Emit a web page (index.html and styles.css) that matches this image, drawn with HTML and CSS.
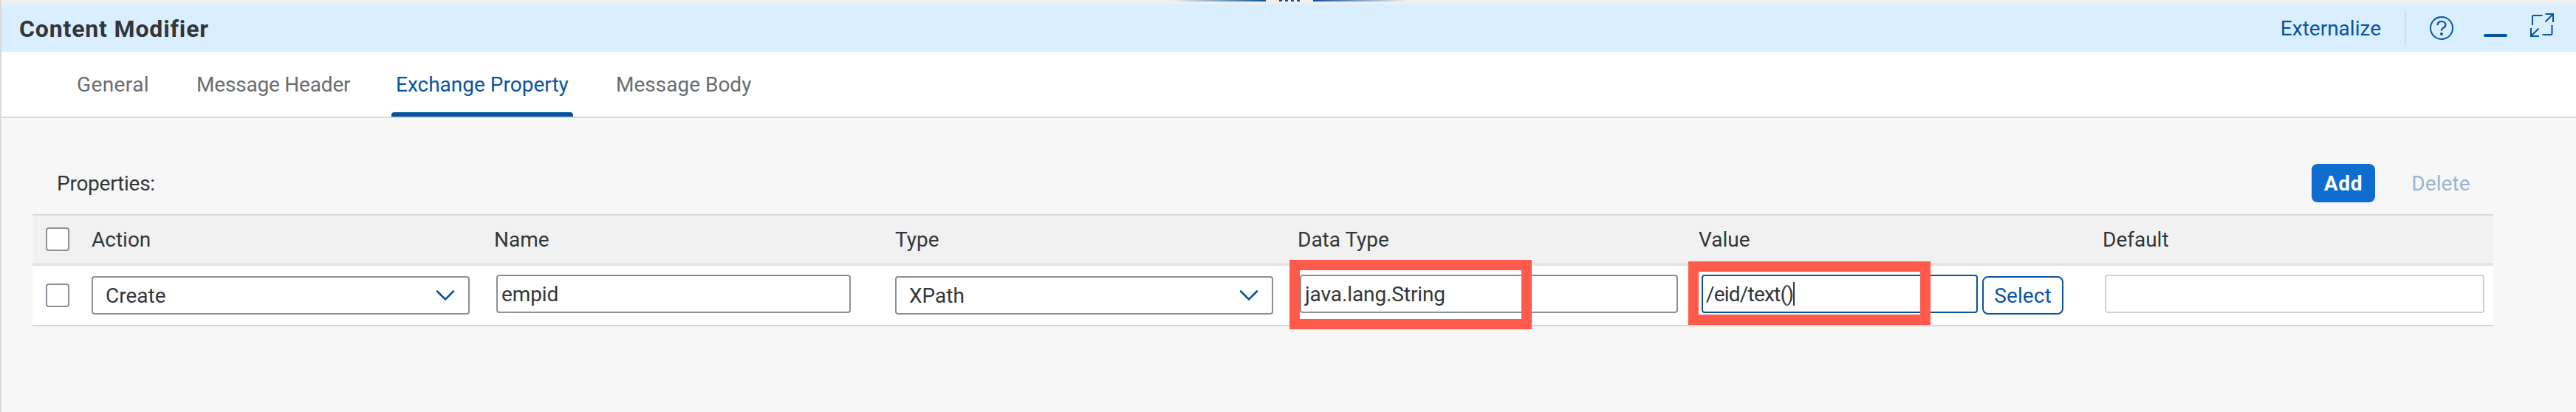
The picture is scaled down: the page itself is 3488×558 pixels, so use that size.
FILE: index.html
```
<!DOCTYPE html>
<html lang="en">
<head>
<meta charset="utf-8">
<title>Content Modifier</title>
<link rel="stylesheet" href="styles.css">
</head>
<body>
<div class="panel">
  <div class="splitter">
    <span class="splitter-line left"></span>
    <span class="dots"><i></i><i></i><i></i><i></i></span>
    <span class="splitter-line right"></span>
  </div>
  <header class="titlebar">
    <h1 class="title">Content Modifier</h1>
    <div class="actions">
      <span class="link">Externalize</span>
      <span class="separator"></span>
      <svg class="icon help" width="32" height="32" viewBox="0 0 32 32" fill="none" stroke="#0854a0" stroke-width="2">
        <circle cx="16" cy="16" r="15"/>
        <path d="M10.600 12.200C10.600 9 12.800 7 16 7s5.400 1.900 5.400 4.700c0 2.300-1.400 3.300-3 4.100-1.600.8-2.400 1.500-2.400 3v1" stroke-width="2.200"/>
        <circle cx="16" cy="24" r="2" fill="#0854a0" stroke="none"/>
      </svg>
      <span class="minimize"></span>
      <svg class="icon expand" width="32" height="32" viewBox="0 0 32 32" fill="none" stroke="#0854a0" stroke-width="2">
        <path d="M3 16V4.500Q3 3 4.500 3H16.500M20.500 1H31V12M31 1L20.500 11.500M1 20V31H12M1 31L11.500 20.500M16.500 29H28Q29.500 29 29.500 27.500V16"/>
      </svg>
    </div>
  </header>
  <nav class="tabs">
    <span class="tab general">General</span>
    <span class="tab header">Message Header</span>
    <span class="tab active">Exchange Property</span>
    <span class="tab body">Message Body</span>
  </nav>
  <main class="content">
    <div class="toolbar">
      <span class="label">Properties:</span>
      <span class="button add">Add</span>
      <span class="button delete">Delete</span>
    </div>
    <div class="table">
      <div class="row head">
        <div class="cell check"><span class="checkbox"></span></div>
        <div class="cell">Action</div>
        <div class="cell col-name">Name</div>
        <div class="cell">Type</div>
        <div class="cell col-shift">Data Type</div>
        <div class="cell col-shift">Value</div>
        <div class="cell col-default">Default</div>
      </div>
      <div class="row item">
        <div class="cell check"><span class="checkbox"></span></div>
        <div class="cell"><div class="select"><span>Create</span>
          <svg width="26" height="16" viewBox="0 0 26 16" fill="none" stroke="#0854a0" stroke-width="2.600" stroke-linecap="round"><path d="M2 2.500L13 13.500L24 2.500"/></svg></div></div>
        <div class="cell"><div class="input name">empid</div></div>
        <div class="cell"><div class="select"><span>XPath</span>
          <svg width="26" height="16" viewBox="0 0 26 16" fill="none" stroke="#0854a0" stroke-width="2.600" stroke-linecap="round"><path d="M2 2.500L13 13.500L24 2.500"/></svg></div></div>
        <div class="cell"><div class="input datatype">java.lang.String</div><span class="highlight first"></span></div>
        <div class="cell"><div class="input value">/eid/text()<span class="caret"></span></div><span class="button choose">Select</span><span class="highlight second"></span></div>
        <div class="cell"><div class="input default"></div></div>
      </div>
    </div>
  </main>
</div>
</body>
</html>
```
FILE: styles.css
```
* { box-sizing: border-box; }
body {
  margin: 0;
  font-family: Roboto, "Liberation Sans", sans-serif;
  font-size: 28px;
  line-height: 32px;
  color: #32363a;
  background: #f7f7f7;
}
.panel { height: 558px; border-left: 2px solid #d9d9d9; overflow: hidden; }

.splitter { display: flex; height: 6px; padding-left: 1585px; background: #edeff0; }
.splitter-line { width: 127px; height: 2px; }
.splitter-line.left { background: linear-gradient(to right, transparent, #0854a0); }
.splitter-line.right { background: linear-gradient(to left, transparent, #0854a0); }
.dots { display: flex; gap: 4px; margin: 0 18px; }
.dots i { width: 4px; height: 2px; background: #0854a0; }

.titlebar {
  display: flex;
  justify-content: space-between;
  align-items: center;
  height: 64px;
  padding: 0 30px 0 24px;
  background: #d9eeff;
}
.title { margin: 2px 0 0; font-size: 32px; font-weight: 700; letter-spacing: .85px; }
.actions { display: flex; align-items: center; }
.link { margin: 2px 32px 0 0; color: #0854a0; }
.separator { width: 2px; height: 48px; margin-right: 32px; background: #d9d9d9; }
.icon { flex: none; display: block; }
.minimize { width: 32px; height: 4px; margin: 20px 31px 0 41px; border-radius: 2px; background: #0854a0; }
.expand { margin-top: -8px; }

.tabs {
  display: flex;
  height: 90px;
  padding-left: 94px;
  border-bottom: 2px solid #d9d9d9;
  background: #fff;
  color: #6a6d70;
  line-height: 88px;
}
.tab { flex: none; height: 88px; padding: 1px 0 0 8px; white-space: nowrap; }
.general { width: 162px; letter-spacing: .4px; }
.header { width: 270px; letter-spacing: -.2px; }
.body { margin-left: 50px; }
.tab.active { width: 248px; color: #0854a0; }
.tab.active::after {
  content: "";
  display: block;
  width: 246px;
  height: 6px;
  margin: -7px 0 0 -6px;
  border-radius: 4px 4px 0 0;
  background: #0854a0;
}

.content { padding: 62px 112px 0 42px; }
.toolbar { display: flex; align-items: center; height: 52px; padding-left: 33px; }
.label { margin: 2px auto 0 0; letter-spacing: -.25px; }
.button { height: 52px; line-height: 54px; border-radius: 8px; text-align: center; }
.add { width: 86px; background: #0f6dd2; color: #fff; font-weight: 700; letter-spacing: .8px; }
.delete { width: 82px; margin: 0 30px 0 48px; color: #0854a0; opacity: .4; letter-spacing: .1px; }

.table { margin-top: 16px; border: solid #d9d9d9; border-width: 2px 0; }
.row { display: grid; grid-template-columns: 80px 544px 544px 544px 543px 544px 1fr; }
.head { height: 68px; border-bottom: 4px solid #e5e5e5; background: #f1f1f1; line-height: 62px; }
.head .cell:not(.check) { padding-top: 2px; }
.head .col-name { padding-left: 1px; }
.head .col-shift { padding-left: 1px; }
.head .col-default { padding-left: 4px; }
.item { height: 80px; background: #fff; }
.cell { display: flex; align-items: center; position: relative; }
.checkbox { width: 32px; height: 32px; margin-left: 18px; border: 2px solid #89919a; border-radius: 4px; background: #fff; }

.select {
  display: flex;
  align-items: center;
  justify-content: space-between;
  width: 512px;
  height: 52px;
  padding: 0 18px 0 17px;
  border: 2px solid #89919a;
  border-radius: 4px;
}
.select span { padding-top: 2px; }
.input {
  display: flex;
  align-items: center;
  height: 52px;
  margin: 0 0 4px 4px;
  padding: 2px 0 0 5px;
  border: 2px solid #89919a;
  border-radius: 4px;
  background: #fff;
}
.name { width: 480px; letter-spacing: -.1px; }
.datatype { width: 512px; letter-spacing: -.1px; }
.value { width: 374px; margin-left: 5px; padding-left: 4px; border-color: #0854a0; letter-spacing: -.8px; }
.default { width: 514px; margin-left: 7px; border-color: #cfd3d7; }
.caret { width: 2px; height: 32px; margin: -2px 0 0 0; background: #32363a; }
.choose { width: 110px; margin-left: 6px; line-height: 50px; border: 2px solid #0854a0; color: #0854a0; letter-spacing: .1px; }

/* Annotation frames lie over the table */
.highlight { position: absolute; width: 328px; border: 14px solid #ff5a4c; }
.first { left: -10px; top: -8px; height: 94px; }
.second { left: -13px; top: -6px; height: 86px; }
```
